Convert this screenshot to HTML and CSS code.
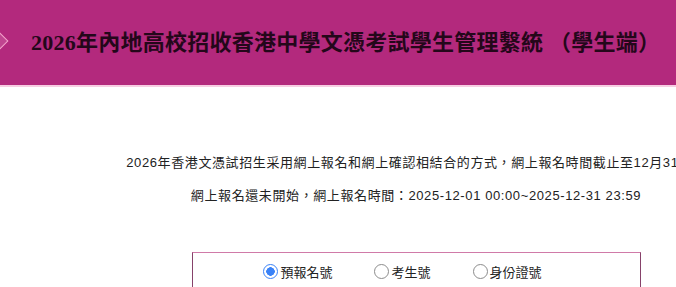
FILE: index.html
```html
<!DOCTYPE html>
<html lang="zh-Hant">

<head>
    <meta charset="UTF-8">
    <meta name="viewport" content="width=device-width, initial-scale=1.0">
    <title>學生管理繫統</title>
    <link rel="stylesheet" href="styles.css">
</head>

<body>
    <div class="header">
        <span class="mark"></span>
        <h1>2026年內地高校招收香港中學文憑考試學生管理繫統 （學生端）</h1>
    </div>

    <div class="main">
        <p class="notice">2026年香港文憑試招生采用網上報名和網上確認相結合的方式，網上報名時間截止至12月31日。</p>
        <p class="notice">網上報名還未開始，網上報名時間：2025-12-01 00:00~2025-12-31 23:59</p>

        <div class="login-box">
            <div class="radio-row">
                <label class="radio"><input type="radio" name="idtype" checked>預報名號</label>
                <label class="radio"><input type="radio" name="idtype">考生號</label>
                <label class="radio"><input type="radio" name="idtype">身份證號</label>
            </div>
        </div>
    </div>
</body>

</html>
```

FILE: styles.css
```css
body {
    margin: 0;
    background: #fff;
    font-family: "Liberation Sans", "Noto Sans CJK TC", sans-serif;
    color: #222;
    overflow: hidden;
}

.header {
    background-color: #b3297d;
    height: 85px;
    border-bottom: 2px solid #f7cde2;
    display: flex;
    align-items: center;
}

.mark {
    width: 10px;
    height: 10px;
    margin-left: -6px;
    margin-top: -4px;
    border: 1.5px solid #f4a3cb;
    background-color: #c04590;
    transform: rotate(45deg);
}

h1 {
    margin: -5px 0 0 25px;
    font-family: "Liberation Serif", "Noto Sans CJK TC", serif;
    font-size: 22px;
    font-weight: bold;
    color: #24071a;
    white-space: nowrap;
    letter-spacing: 0.25px;
}

.main {
    width: 832px;
    text-align: center;
    padding-top: 67px;
}

.notice {
    margin: 0 0 15px;
    font-size: 13px;
    line-height: 18px;
    letter-spacing: 0.6px;
    white-space: nowrap;
}

.login-box {
    width: 447px;
    margin: 47px auto 0;
    border: 1px solid #86426a;
    border-top-color: #d07aa8;
    height: 60px;
}

.radio-row {
    display: flex;
    justify-content: center;
    padding: 9px 0 0 15px;
    font-size: 13px;
}

.radio {
    display: flex;
    align-items: center;
    margin-right: 42px;
}

.radio input {
    appearance: none;
    width: 15px;
    height: 15px;
    margin: 0 2px 0 0;
    border: 1px solid #8c8c8c;
    border-radius: 50%;
    background: #fff;
}

.radio input:checked {
    border-color: #3a82f7;
    background: radial-gradient(circle, #3a82f7 0 4px, #fff 4.5px);
}
```
